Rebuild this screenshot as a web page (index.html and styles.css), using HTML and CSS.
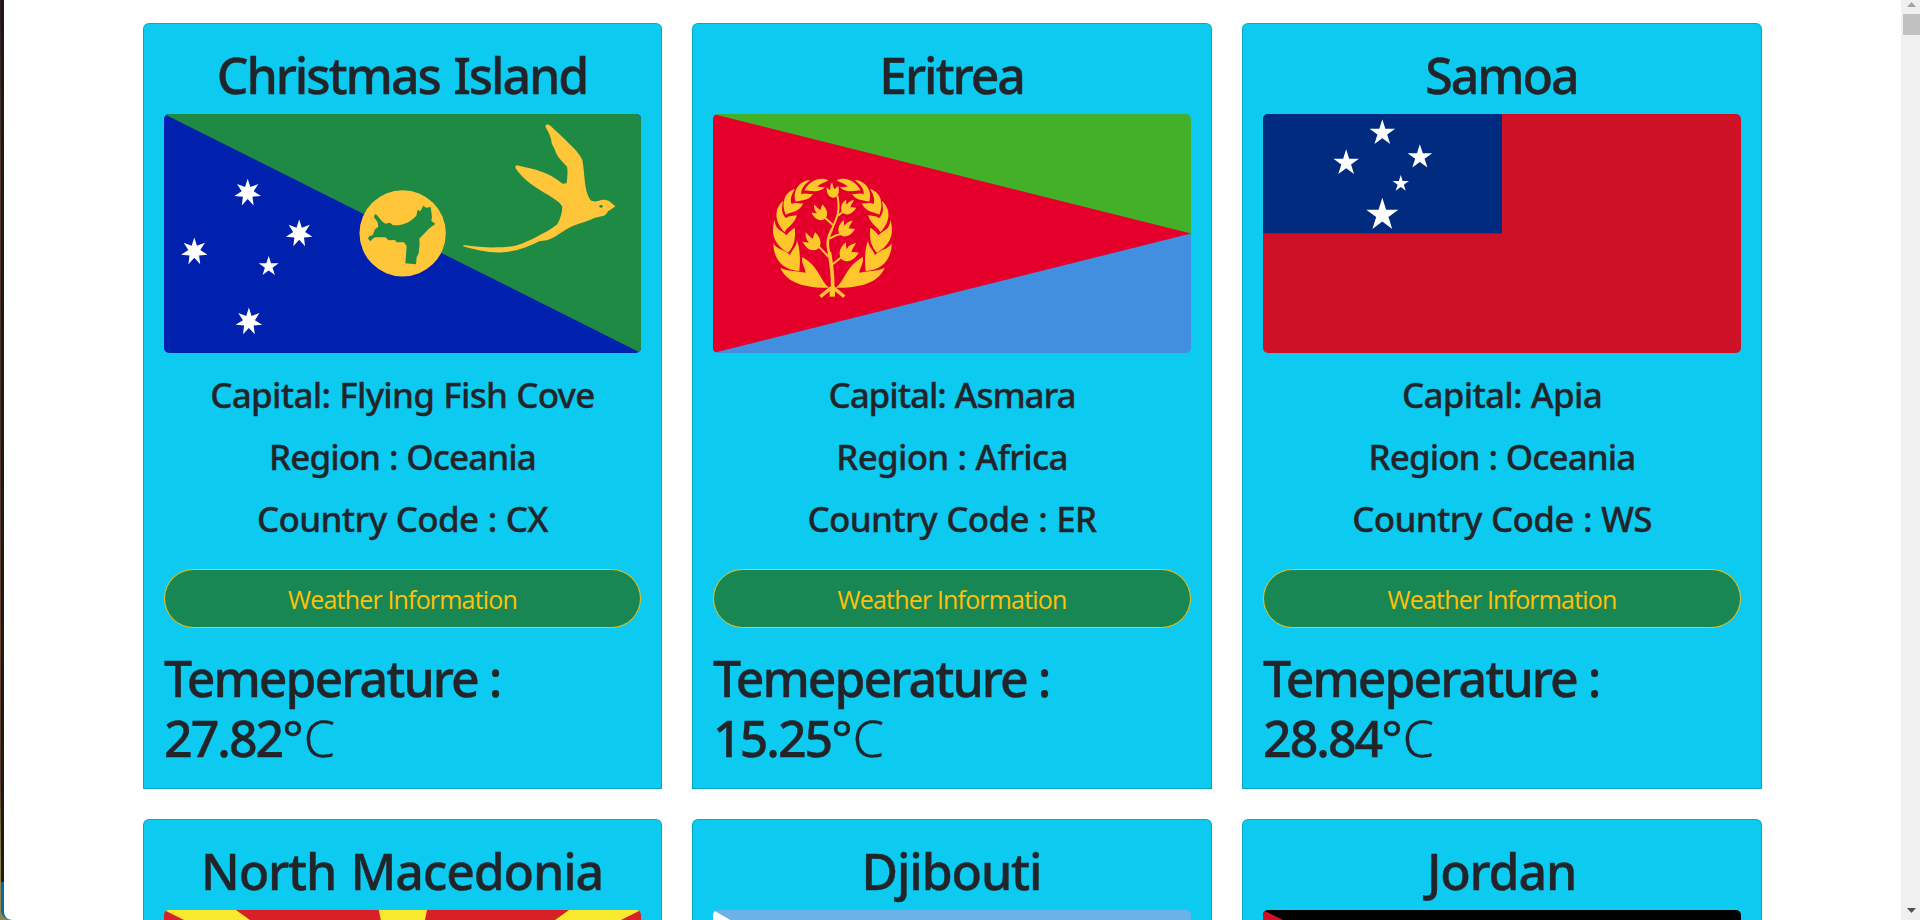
FILE: index.html
```html
<!DOCTYPE html>
<html lang="en">
<head>
<meta charset="utf-8">
<title>Countries</title>
<link rel="stylesheet" href="styles.css">
</head>
<body>
<svg width="0" height="0" class="defs">
  <defs>
    <polygon id="star5" points="0,-1 .2245,-.309 .951,-.309 .3633,.118 .5878,.809 0,.382 -.5878,.809 -.3633,.118 -.951,-.309 -.2245,-.309"/>
    <polygon id="star7" points="0,-1 .195,-.405 .782,-.623 .439,-.1 .975,.223 .352,.28 .434,.901 0,.45 -.434,.901 -.352,.28 -.975,.223 -.439,-.1 -.782,-.623 -.195,-.405"/>
    <path id="bud" d="M0,24 C-18,22 -25,4 -20,-16 C-15,-9 -11,-6 -8,-4 C-10,-14 -6,-22 1,-30 C3,-22 2,-12 6,-5 C10,-9 14,-12 21,-15 C24,4 17,22 0,24Z"/>
    <g id="laurel">
      <path d="M61,308 C76,346 122,370 208,368 C182,352 178,303 126,276 C124,298 136,308 137,323 C115,317 82,320 61,308Z"/>
      <path d="M40,234 C40,282 68,316 118,318 C122,285 119,245 111,227 C110,244 92,260 90,270 C72,252 50,254 40,234Z"/>
      <path d="M44,165 C33,198 38,238 84,263 C103,245 108,215 104,188 C96,194 84,202 80,211 C64,194 46,196 44,165Z"/>
      <path d="M69,108 C43,130 41,168 74,202 C80,186 102,180 111,150 C101,154 88,150 78,160 C62,142 66,130 69,108Z"/>
      <path d="M105,71 C72,82 63,115 77,149 C92,142 118,142 130,115 C118,118 106,110 95,117 C88,102 97,85 105,71Z"/>
      <path d="M151,45 C120,46 96,76 107,110 C124,104 148,108 159,86 C146,90 136,82 124,88 C122,68 137,57 151,45Z"/>
      <path d="M205,46 C188,36 152,40 133,76 C150,78 182,84 195,66 C186,69 180,64 172,66 C182,54 194,54 205,46Z"/>
    </g>
  </defs>
</svg>
<div class="frame">
  <div class="window">
    <main class="page">
      <div class="grid">
        <article class="card">
          <h1 class="name">Christmas Island</h1>
          <svg class="flag" viewBox="-528 12 1431 717" preserveAspectRatio="none">
            <rect x="-528" y="12" width="1431" height="717" fill="#0021ad"/>
            <polygon points="-528,12 903,12 903,729" fill="#1f8a43"/>
            <svg x="-528" y="12" width="1431" height="717" viewBox="99 312 1385 716" preserveAspectRatio="none" fill="#fff">
              <use href="#star7" transform="translate(342 548) scale(39.5 42)"/>
              <use href="#star7" transform="translate(491.5 670) scale(39.5 42)"/>
              <use href="#star7" transform="translate(187 724) scale(39.5 42)"/>
              <use href="#star7" transform="translate(345.5 934) scale(39.5 42)"/>
              <use href="#star5" transform="translate(403 769) scale(30.5 31.5)"/>
            </svg>
            <circle cx="188" cy="370" r="129.5" fill="#ffc639"/>
            <path fill="#1f8a43" d="M104,313 L110,314 L126,334 L136,341 L150,338 L158,345 C180,349 208,340 229,317 L233,299 L241,304 L250,287 L258,293 L272,291 L276,320 L274,332 L286,342 L274,350 C262,359 250,374 238,386 L239,403 L236,430 L230,442 L228,463 L196,460 L200,408 L192,397 L170,397 L165,390 L146,391 L136,382 L106,382 L98,386 L92,394 L84,386 L88,378 L98,376 L105,358 L115,350 L113,337 L102,322Z"/>
            <path fill="#ffc639" d="M617,45 C622,42 628,43 632,48 L664,78 C690,103 716,126 727,150 C735,190 731,240 751,270 C760,277 774,274 780,271 C790,268 801,269 808,274 L826,289 C820,295 812,298 804,304 C800,312 796,318 788,318 L765,323 C745,333 722,338 700,347 C670,360 645,384 620,391 L598,394 C565,411 530,424 490,427 C450,430 405,420 370,409 L371,405 C410,411 440,413 480,412 C535,411 555,396 585,383 C610,370 635,358 652,343 C660,327 667,310 667,290 C660,276 640,264 618,251 C585,232 548,208 527,175 C524,169 528,164 536,167 C580,176 625,185 668,221 L680,220 C682,200 684,185 681,170 C662,150 650,138 645,120 L635,100 C634,82 625,65 617,52Z"/>
            <ellipse cx="783" cy="289" rx="5" ry="4" fill="#1f8a43"/>
          </svg>
          <h3 class="fact">Capital: Flying Fish Cove</h3>
          <h3 class="fact fact-region">Region : Oceania</h3>
          <h3 class="fact fact-code">Country Code : CX</h3>
          <button class="btn">Weather Information</button>
          <div class="temp">Temeperature :<br>27.82<span class="degree">°</span><span class="unit">C</span></div>
        </article>

        <article class="card">
          <h1 class="name">Eritrea</h1>
          <svg class="flag" viewBox="39 42 1434 717" preserveAspectRatio="none">
            <rect x="39" y="42" width="1434" height="359" fill="#43b02a"/>
            <rect x="39" y="400.500" width="1434" height="359" fill="#418fde"/>
            <polygon points="39,42 1473,400.500 39,759" fill="#e4002b"/>
            <g transform="translate(180 195)" fill="#ffc72c">
              <use href="#laurel"/>
              <use href="#laurel" transform="translate(435 0) scale(-1 1)"/>
              <g fill="none" stroke="#ffc72c" stroke-width="6">
                <path stroke-width="11" d="M218,370 C219,330 213,290 208,262"/>
                <path stroke-width="16" d="M217,395 V368"/>
                <path stroke-width="8" d="M209,268 C198,235 204,215 216,192"/>
                <path d="M214,196 C228,165 243,140 232,92"/>
                <path stroke-width="10" d="M181,395 L217,366 L253,395"/>
                <path d="M190,154 L219,180 M176,244 L206,276 M254,136 L234,152 M244,206 Q225,210 210,220 M245,276 L218,298"/>
              </g>
              <use href="#bud" transform="translate(219 78) rotate(-8) scale(.85)"/>
              <use href="#bud" transform="translate(180 143) rotate(-38)"/>
              <use href="#bud" transform="translate(157 230) rotate(-38) scale(1.15)"/>
              <use href="#bud" transform="translate(264 127) rotate(38) scale(.95)"/>
              <use href="#bud" transform="translate(258 191) rotate(38) scale(1.05)"/>
              <use href="#bud" transform="translate(265 262) rotate(38) scale(1.2)"/>
            </g>
          </svg>
          <h3 class="fact fact-short">Capital: Asmara</h3>
          <h3 class="fact">Region : Africa</h3>
          <h3 class="fact fact-code">Country Code : ER</h3>
          <button class="btn">Weather Information</button>
          <div class="temp">Temeperature :<br>15.25<span class="degree">°</span><span class="unit">C</span></div>
        </article>

        <article class="card">
          <h1 class="name">Samoa</h1>
          <svg class="flag" viewBox="67 312 1388 717" preserveAspectRatio="none">
            <rect x="67" y="312" width="1388" height="717" fill="#ce1126"/>
            <rect x="67" y="312" width="694" height="358" fill="#002b7f"/>
            <g fill="#fff">
              <use href="#star5" transform="translate(413.500 369) scale(39 41)"/>
              <use href="#star5" transform="translate(308.500 459) scale(39 41)"/>
              <use href="#star5" transform="translate(522.500 441.500) scale(37.500 38.500)"/>
              <use href="#star5" transform="translate(467 521) scale(25 26)"/>
              <use href="#star5" transform="translate(413.500 615) scale(49 52)"/>
            </g>
          </svg>
          <h3 class="fact">Capital: Apia</h3>
          <h3 class="fact fact-region">Region : Oceania</h3>
          <h3 class="fact fact-code">Country Code : WS</h3>
          <button class="btn">Weather Information</button>
          <div class="temp">Temeperature :<br>28.84<span class="degree">°</span><span class="unit">C</span></div>
        </article>

        <article class="card">
          <h1 class="name name-wide">North Macedonia</h1>
          <svg class="flag" viewBox="89 840 1246 717" preserveAspectRatio="none">
            <rect x="89" y="840" width="1246" height="717" fill="#d82126"/>
            <g fill="#f8e92e">
              <polygon points="89,840 277,840 712,1198"/>
              <polygon points="1335,840 1147,840 712,1198"/>
              <polygon points="650,840 776,840 712,1198"/>
              <polygon points="89,1557 277,1557 712,1198"/>
              <polygon points="1335,1557 1147,1557 712,1198"/>
              <polygon points="650,1557 776,1557 712,1198"/>
              <polygon points="89,1126 89,1270 712,1198"/>
              <polygon points="1335,1126 1335,1270 712,1198"/>
            </g>
            <ellipse cx="712" cy="1198" rx="100" ry="115" fill="#f8e92e" stroke="#d82126" stroke-width="16"/>
          </svg>
        </article>

        <article class="card">
          <h1 class="name name-wide">Djibouti</h1>
          <svg class="flag" viewBox="67 330 1388 717" preserveAspectRatio="none">
            <rect x="67" y="330" width="1388" height="359" fill="#6ab2e7"/>
            <rect x="67" y="688" width="1388" height="359" fill="#12ad2b"/>
            <polygon points="67,330 667,688 67,1047" fill="#fff"/>
            <use href="#star5" transform="translate(260 695) scale(90 93)" fill="#d7141a"/>
          </svg>
        </article>

        <article class="card">
          <h1 class="name name-wide">Jordan</h1>
          <svg class="flag" viewBox="75 390 1086 717" preserveAspectRatio="none">
            <rect x="75" y="390" width="1086" height="239" fill="#000"/>
            <rect x="75" y="629" width="1086" height="239" fill="#fff"/>
            <rect x="75" y="868" width="1086" height="239" fill="#007a3d"/>
            <polygon points="75,390 618,748 75,1107" fill="#ce1126"/>
          </svg>
        </article>
      </div>
    </main>
    <div class="scroll">
      <svg class="arrow" viewBox="0 0 9 5"><path d="M0 5L4.500 0L9 5Z" fill="#a3a3a3"/></svg>
      <div class="thumb"></div>
      <svg class="arrow" viewBox="0 0 9 5"><path d="M0 0L4.500 5L9 0Z" fill="#505050"/></svg>
    </div>
  </div>
</div>
</body>
</html>
```
FILE: styles.css
```css
* { box-sizing: border-box; }

body {
  margin: 0;
  overflow: hidden;
  color: #212529;
  font-family: "Noto Sans", sans-serif;
}

.defs { display: block; }

.frame {
  height: 920px;
  padding-left: 1px;
  background: linear-gradient(#2a1f1e 0, #5a3a36 180px, #4a302c 400px, #6b4630 640px, #5a3a2c 780px, #8f8648 860px, #8f8648 100%);
}

.window {
  display: flex;
  height: 920px;
  padding-left: 3px;
  overflow: hidden;
  border-bottom-left-radius: 10px;
  background: linear-gradient(#1c1a18 882px, #0a64ad 882px);
}

.page {
  flex: 1;
  height: 920px;
  overflow: hidden;
  border-bottom-left-radius: 8px;
  background: #fff;
}

.grid {
  display: grid;
  grid-template-columns: 519px 520px 520px;
  gap: 30px;
  margin: 23px 0 0 139px;
}

.card {
  display: flex;
  flex-direction: column;
  padding: 20px;
  border: 1px solid rgba(0, 0, 0, .175);
  border-radius: 6px 6px 0 0;
  background: #0dcaf0;
}

.name {
  margin: 0 0 9px;
  padding-top: 1px;
  font-size: 50px;
  font-weight: 500;
  line-height: 60px;
  letter-spacing: -2.05px;
  word-spacing: 2.5px;
  text-align: center;
  text-indent: -1px;
  white-space: nowrap;
  -webkit-text-stroke: .4px;
}

.name-wide { letter-spacing: -1.15px; }

.flag {
  display: block;
  width: 100%;
  height: 239px;
  margin-bottom: 21px;
  border-radius: 5px;
}

.fact {
  margin: 0 0 20px;
  font-size: 35px;
  font-weight: 500;
  line-height: 42px;
  letter-spacing: -.75px;
  word-spacing: .7px;
  text-align: center;
  white-space: nowrap;
  -webkit-text-stroke: .3px;
}

.fact-region { letter-spacing: -.95px; }

.fact-short { letter-spacing: -1.05px; }

.fact-code { letter-spacing: -.65px; }

.btn {
  height: 59px;
  margin: 9px 0 20px;
  padding: 1px 0 0;
  border: 1px solid #ffc107;
  border-radius: 30px;
  background: #198754;
  color: #ffc107;
  font-family: "Open Sans", sans-serif;
  font-size: 25px;
  letter-spacing: -.83px;
}

.temp {
  font-size: 50px;
  font-weight: 500;
  line-height: 60px;
  letter-spacing: -1.95px;
  -webkit-text-stroke: .4px;
}

.degree { font-weight: 400; }

.unit {
  margin-left: 2px;
  font-weight: 300;
}

.scroll {
  display: flex;
  flex-direction: column;
  width: 19px;
  height: 920px;
  padding: 2px 0 7px;
  background: #f0f0f0;
}

.arrow {
  width: 9px;
  height: 5px;
  margin-left: 6px;
}

.thumb {
  height: 21px;
  margin: 7px 0 auto 2px;
  background: #c1c1c1;
}
```
